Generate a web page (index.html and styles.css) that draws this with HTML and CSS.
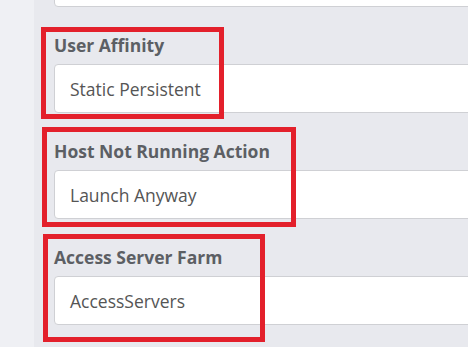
FILE: index.html
```html
<!DOCTYPE html>
<html lang="en">
<head>
  <meta charset="UTF-8">
  <title>Application Settings</title>
  <meta name="viewport" content="width=device-width, initial-scale=1.0">
  <link rel="stylesheet" href="styles.css">
</head>
<body>

  <div class="side-bar"></div>

  <div class="main-section">
    <div class="field-value field-cut"></div>

    <div class="form-group">
      <label>User Affinity</label>
      <div class="field-value">Static Persistent</div>
      <div class="mark mark-one"></div>
    </div>

    <div class="form-group">
      <label>Host Not Running Action</label>
      <div class="field-value">Launch Anyway</div>
      <div class="mark mark-two"></div>
    </div>

    <div class="form-group">
      <label>Access Server Farm</label>
      <div class="field-value">AccessServers</div>
      <div class="mark mark-three"></div>
    </div>
  </div>

</body>
</html>
```

FILE: styles.css
```css
* {
  box-sizing: border-box;
  font-family: 'Open Sans', sans-serif;
}

body {
  margin: 0;
  padding: 0;
  display: flex;
  height: 100vh;
  overflow: hidden;
}

.side-bar {
  width: 34px;
  background-color: #eff0f4;
}

.main-section {
  flex: 1;
  background-color: #e8e9ee;
  padding-left: 20px;
  overflow: hidden;
}

.field-value {
  width: calc(100% + 20px);
  height: 49px;
  background-color: #fff;
  border: 1px solid #cfd0d4;
  border-radius: 4px;
  padding: 0 15px;
  font-size: 17.5px;
  line-height: 48px;
  color: #555;
}

.field-cut {
  margin-top: -42px;
}

.form-group {
  position: relative;
  margin-top: 25px;
}

.form-group label {
  display: block;
  font-size: 17.5px;
  font-weight: bold;
  line-height: 27px;
  margin-bottom: 5px;
  color: #5c5f64;
}

/* red annotation boxes drawn over the fields */
.mark {
  position: absolute;
  border: 5px solid #e3202b;
}

.mark-one {
  left: -13px;
  top: -5px;
  width: 183px;
  height: 92px;
}

.mark-two {
  left: -12px;
  top: -11px;
  width: 254px;
  height: 100px;
}

.mark-three {
  left: -11px;
  top: -10px;
  width: 222px;
  height: 108px;
}
```
